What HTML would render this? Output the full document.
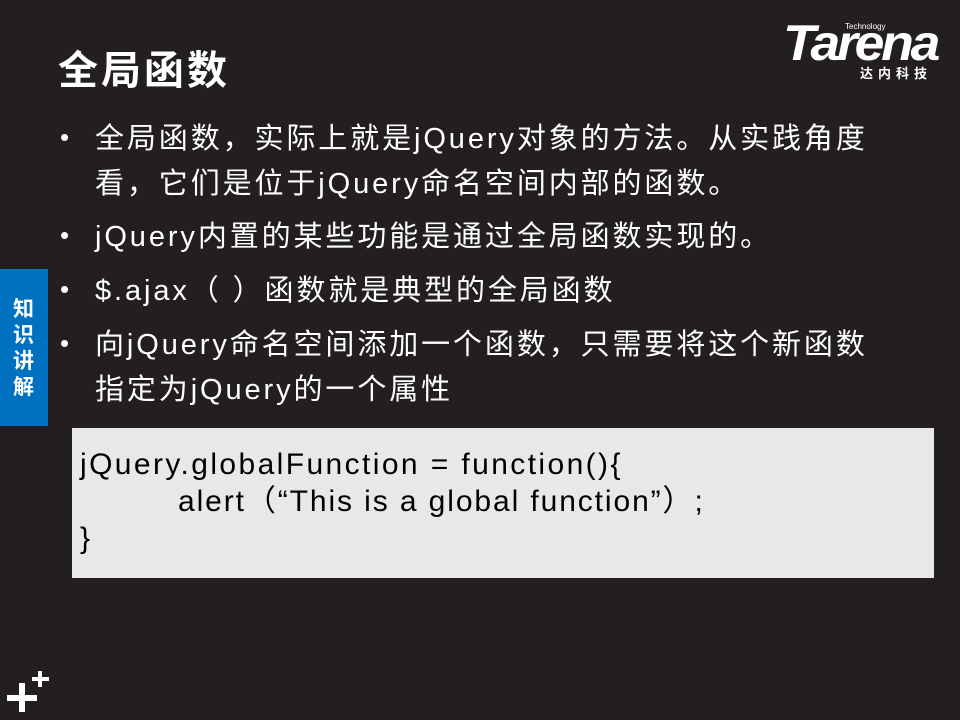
<!DOCTYPE html>
<html><head><meta charset="utf-8"><style>
body{margin:0;width:960px;height:720px;background:#231f20;position:relative;overflow:hidden;font-family:"Liberation Sans","Noto Sans CJK SC",sans-serif;color:#fff}
.a{position:absolute;white-space:nowrap}
.t{left:58px;top:38px;font-size:40px;font-weight:bold;letter-spacing:3px}
.b{font-size:29px;line-height:45px;letter-spacing:2.9px}
.dot{left:60px;font-size:26px}
.tab{left:0;top:269px;width:48px;height:157px;background:#0070c0}
.tab div{position:absolute;left:13px;top:28px;width:22px;font-size:21px;font-weight:bold;line-height:26px;white-space:normal}
.code{left:72px;top:428px;width:862px;height:150px;background:#e8e8e8;color:#000;font-size:30px;line-height:37px;letter-spacing:2.4px}
</style></head><body>
<div class="a t">全局函数</div>
<div class="a" style="left:783px;top:18px;width:160px;font-size:50px;font-weight:bold;font-style:italic;letter-spacing:-3px;line-height:50px;transform:scaleX(1.07);transform-origin:left">Tarena</div>
<div class="a" style="left:845px;top:22px;font-size:8px">Technology</div>
<div class="a" style="left:860px;top:63px;font-size:13px;font-weight:bold;letter-spacing:5px">达内科技</div>
<div class="a dot" style="top:122px">•</div>
<div class="a b" style="left:95px;top:117px">全局函数，实际上就是jQuery对象的方法。从实践角度</div>
<div class="a b" style="left:95px;top:162px">看，它们是位于jQuery命名空间内部的函数。</div>
<div class="a dot" style="top:220px">•</div>
<div class="a b" style="left:95px;top:215px">jQuery内置的某些功能是通过全局函数实现的。</div>
<div class="a dot" style="top:274px">•</div>
<div class="a b" style="left:95px;top:269px">$.ajax（  ）函数就是典型的全局函数</div>
<div class="a dot" style="top:328px">•</div>
<div class="a b" style="left:95px;top:323px">向jQuery命名空间添加一个函数，只需要将这个新函数</div>
<div class="a b" style="left:95px;top:368px">指定为jQuery的一个属性</div>
<div class="a tab"><div>知识讲解</div></div>
<div class="a code"><div style="position:absolute;left:8px;top:18px">jQuery.globalFunction = function(){<br><span style="padding-left:98px;letter-spacing:1.9px">alert（“This is a global function”）;</span><br>}</div></div>
<div class="a" style="left:7px;top:695px;width:30px;height:6px;background:#fff"></div>
<div class="a" style="left:19px;top:683px;width:6px;height:29px;background:#fff"></div>
<div class="a" style="left:32px;top:677px;width:17px;height:4px;background:#fff"></div>
<div class="a" style="left:38px;top:671px;width:4px;height:16px;background:#fff"></div>
</body></html>
